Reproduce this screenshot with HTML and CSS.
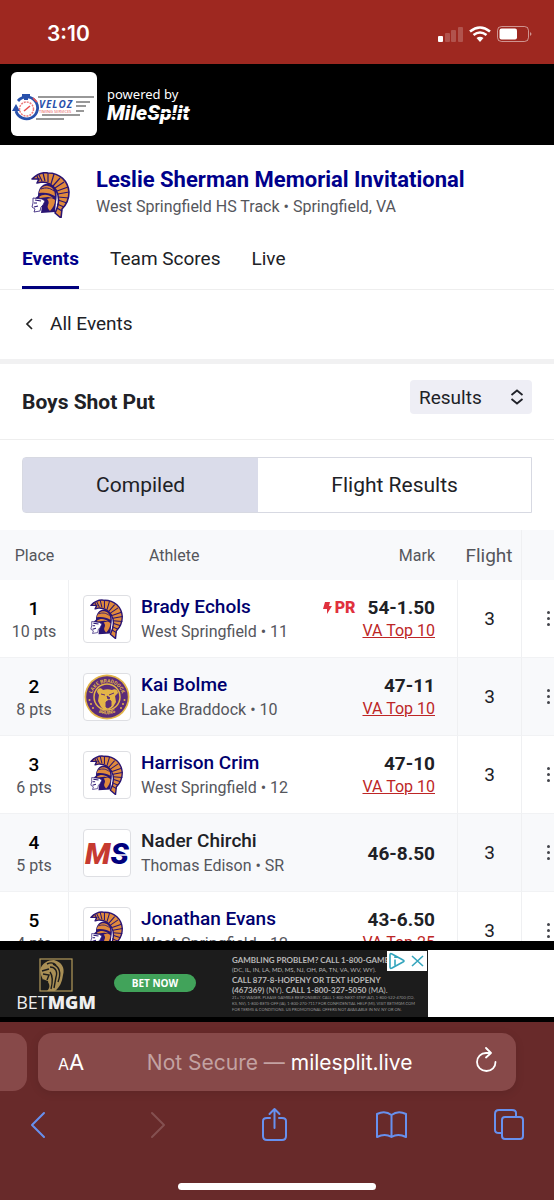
FILE: index.html
```html
<!DOCTYPE html>
<html lang="en">
<head>
    <meta charset="utf-8">
    <meta name="viewport" content="width=device-width, initial-scale=1">
    <title>Leslie Sherman Memorial Invitational</title>
    <link rel="stylesheet" href="styles.css">
</head>
<body>
    <!-- Shared logo -->
    <svg class="sprite" aria-hidden="true">
        <symbol id="spartan" viewBox="0 0 40 46">
            <path d="M1 7C6 2 12 0 17 1c12 0 20 8 21 19 0 7-3 13-7 17l-1 9-6-5c4-8 5-16 1-23-4-6-9-8-14-8l-5 1 2-4z" fill="#e08a3c" stroke="#2a1472" stroke-width="1.6" stroke-linejoin="round"/>
            <path d="M8 9 6 4M11 9 8 3M14 9 12 1M17 10V1M20 12l3-10M22 14l7-8M24 16l9-6M26 19l11-4M27 22l11-2M27 25l11 1M27 28l9 3M26 32l7 3M26 36l5 3" stroke="#2a1472" stroke-width="1.2" fill="none"/>
            <path d="M7 24c0-8 5-13 11-12 7 2 9 9 7 18l-1 10-14 1 1-7-8-7 4-3z" fill="#2a1472"/>
            <path d="M8 21c1-5 5-8 9-7 5 1 7 5 7 10-5-3-10-4-16-3z" fill="#e08a3c"/>
            <path d="M8 25c4-3 9-3 14 1l-5-1-8 1z" fill="#e08a3c"/>
            <path d="M10 17c5-2 9-1 13 2" stroke="#2a1472" fill="none"/>
            <path d="M16 27c3-1 6-1 8 1 0 4-2 8-5 11-2-2-3-4-2-6 1-2 1-4-1-6z" fill="#e08a3c"/>
            <path d="M2 26l9 1 3 2-2 4-2 2-1 4-6 1 1-3-3-2 1-4z" fill="#fff" stroke="#2a1472" stroke-width=".8"/>
            <path d="M4 28l6 1M3 35l4-1M3 31h3" stroke="#2a1472" stroke-width="1.200"/>
        </symbol>
    </svg>

    <div class="status-bar">
        <span class="time">3:10</span>
        <svg class="status-icons" width="94" height="18" viewBox="0 0 94 18" aria-hidden="true">
            <g fill="#fff"><rect y="11" width="5" height="6" rx="1"/>
            <g opacity=".2"><rect x="7" y="8" width="5" height="9" rx="1"/><rect x="13" y="5" width="5" height="12" rx="1"/><rect x="20" y="2" width="5" height="15" rx="1"/></g></g>
            <path d="M32 6.500q10-8 20 0M35.500 10q6.500-5 13 0" fill="none" stroke="#fff" stroke-width="2.600"/>
            <path d="M38.500 13q3.500-2.500 7 0L42 17z" fill="#fff"/>
            <rect x="59.500" y="1.500" width="31" height="15" rx="4" fill="none" stroke="#fff" stroke-opacity=".5"/>
            <rect x="61.500" y="3.500" width="17.500" height="11" rx="2" fill="#fff"/>
            <path d="M92 7q3 2 0 4z" fill="#fff" opacity=".5"/>
        </svg>
    </div>

    <header class="brand-bar">
        <a class="veloz" href="#" aria-label="Veloz Timing Services">
            <svg width="86" height="64" viewBox="0 0 86 64">
                <path d="M27 25h56M65 30h14M65 34h10M65 39h8M31 43h38M25 47h28" stroke="#333" stroke-width="1.200"/>
                <path d="M7 29a11 11 0 1 1-2 10" fill="none" stroke="#2850ab" stroke-width="2.800"/>
                <path d="M11 22h8v3h-2v3h-4v-3h-2zM1 39l4-7 4 7z" fill="#2850ab"/>
                <circle cx="15.500" cy="37" r="7" fill="none" stroke="#ee7c7c" stroke-width="1.500" stroke-dasharray="2 1"/>
                <path d="M13 39l6-5M22 26l4 4" stroke="#e85151" stroke-width="1.600"/>
                <text x="28" y="36" class="veloz-name">VELOZ</text>
                <text x="28" y="41" class="veloz-sub">TIMING SERVICES</text>
            </svg>
        </a>
        <div class="powered">
            <span>powered by</span>
            <span class="milesplit">MileSp!it</span>
        </div>
    </header>

    <main class="page">
        <section class="meet">
            <svg class="meet-logo" aria-hidden="true"><use href="#spartan"/></svg>
            <div>
                <h1>Leslie Sherman Memorial Invitational</h1>
                <p>West Springfield HS Track • Springfield, VA</p>
            </div>
        </section>

        <nav class="tabs">
            <a class="active" href="#">Events</a>
            <a href="#">Team Scores</a>
            <a href="#">Live</a>
        </nav>

        <a class="back" href="#">
            <svg width="8" height="12" viewBox="0 0 8 12" aria-hidden="true"><path d="M7 1 2 6l5 5" fill="none" stroke="#222" stroke-width="1.700"/></svg>
            All Events
        </a>

        <section class="event-head">
            <h2>Boys Shot Put</h2>
            <div class="select-wrap">
                <select aria-label="View"><option>Results</option></select>
                <svg width="14" height="16" viewBox="0 0 14 16" aria-hidden="true"><path d="M1.500 6 7 1.500 12.500 6M1.500 10 7 14.500l5.500-4.500" fill="none" stroke="#1f2128" stroke-width="1.800"/></svg>
            </div>
        </section>

        <div class="toggle">
            <button class="selected" type="button">Compiled</button>
            <button type="button">Flight Results</button>
        </div>

        <table class="results">
            <thead>
                <tr><th class="place">Place</th><th class="athlete">Athlete</th><th class="mark">Mark</th><th class="flight">Flight</th><th class="more"></th></tr>
            </thead>
            <tbody>
                <tr>
                    <td class="place"><b>1</b><span>10 pts</span></td>
                    <td class="athlete"><div class="person"><div class="logo"><svg><use href="#spartan"/></svg></div><div><a href="#">Brady Echols</a><span>West Springfield • 11</span></div></div></td>
                    <td class="mark"><div class="mark-line"><span class="pr"><svg width="9" height="12" viewBox="0 0 9 12" aria-hidden="true"><path d="M2 0h5L6 4h3l-5 8V7H0z" fill="#e0313d"/></svg>PR</span><b>54-1.50</b></div><a href="#">VA Top 10</a></td>
                    <td class="flight">3</td>
                    <td class="more"><button type="button" aria-label="More"><i></i><i></i><i></i></button></td>
                </tr>
                <tr>
                    <td class="place"><b>2</b><span>8 pts</span></td>
                    <td class="athlete"><div class="person"><div class="logo full">
                        <svg viewBox="0 0 46 46">
                            <circle cx="23" cy="23" r="22.500" fill="#e3b548"/>
                            <circle cx="23" cy="23" r="20.800" fill="#5b2c78"/>
                            <circle cx="23" cy="23" r="13" fill="#5b2c78" stroke="#e3b548" stroke-width="1.500"/>
                            <path d="M13 18c0-4 4-5 6-2 3-1 6-1 9 0 3-2 6 0 6 3l-3 3 1 6-3 5-3 2-6 1-3-3-3-6 1-6z" fill="#e3b548"/>
                            <path d="M17 20l4 1M30 19l-5 2M23 22l3 2-2 1zM22 28l3-2 2 1v5l-3 2-2-1z" fill="#5b2c78" stroke="#5b2c78"/>
                            <path id="ring-top" d="M7.500 24a15.500 15.500 0 0 1 31 0" fill="none"/>
                            <path id="ring-bottom" d="M7 30a17.500 17.500 0 0 0 32 0" fill="none"/>
                            <text class="ring-text"><textPath href="#ring-top" startOffset="50%" text-anchor="middle">LAKE BRADDOCK</textPath></text>
                            <text class="ring-text"><textPath href="#ring-bottom" startOffset="50%" text-anchor="middle">BRUINS</textPath></text>
                            <g fill="#e3b548"><circle cx="5.500" cy="26" r="1"/><circle cx="7" cy="30" r="1"/><circle cx="9" cy="34" r="1"/><circle cx="40.500" cy="26" r="1"/><circle cx="39" cy="30" r="1"/><circle cx="37" cy="34" r="1"/></g>
                        </svg>
                    </div><div><a href="#">Kai Bolme</a><span>Lake Braddock • 10</span></div></div></td>
                    <td class="mark"><div class="mark-line"><b>47-11</b></div><a href="#">VA Top 10</a></td>
                    <td class="flight">3</td>
                    <td class="more"><button type="button" aria-label="More"><i></i><i></i><i></i></button></td>
                </tr>
                <tr>
                    <td class="place"><b>3</b><span>6 pts</span></td>
                    <td class="athlete"><div class="person"><div class="logo"><svg><use href="#spartan"/></svg></div><div><a href="#">Harrison Crim</a><span>West Springfield • 12</span></div></div></td>
                    <td class="mark"><div class="mark-line"><b>47-10</b></div><a href="#">VA Top 10</a></td>
                    <td class="flight">3</td>
                    <td class="more"><button type="button" aria-label="More"><i></i><i></i><i></i></button></td>
                </tr>
                <tr>
                    <td class="place"><b>4</b><span>5 pts</span></td>
                    <td class="athlete"><div class="person"><div class="logo full"><svg viewBox="0 0 46 46"><text x="1" y="34" class="ms">M<tspan class="ms-s">S</tspan></text><path d="M28 25h18" stroke="#fff" stroke-width="1.500"/></svg></div><div><strong>Nader Chirchi</strong><span>Thomas Edison • SR</span></div></div></td>
                    <td class="mark"><div class="mark-line"><b>46-8.50</b></div></td>
                    <td class="flight">3</td>
                    <td class="more"><button type="button" aria-label="More"><i></i><i></i><i></i></button></td>
                </tr>
                <tr>
                    <td class="place"><b>5</b><span>4 pts</span></td>
                    <td class="athlete"><div class="person"><div class="logo"><svg><use href="#spartan"/></svg></div><div><a href="#">Jonathan Evans</a><span>West Springfield • 12</span></div></div></td>
                    <td class="mark"><div class="mark-line"><b>43-6.50</b></div><a href="#">VA Top 25</a></td>
                    <td class="flight">3</td>
                    <td class="more"><button type="button" aria-label="More"><i></i><i></i><i></i></button></td>
                </tr>
            </tbody>
        </table>
    </main>

    <aside class="ad-strip">
        <div class="ad">
            <div class="betmgm">
                <svg width="34" height="34" viewBox="0 0 34 34" aria-hidden="true">
                    <rect x="1" y="1" width="32" height="32" fill="none" stroke="#b39a5b" stroke-width="1.200"/>
                    <path d="M1 12C3 5 9 2 15 2c8 2 11 8 9 15-1 7-3 12-8 16H8c3-3 3-6 1-9l-5-2-2-5z" fill="#a98f55"/>
                    <path d="M3 13l7-2M4 16l6 1-2 5M11 9c5 0 8 4 6 10l-2 11M14 6c7 3 8 10 5 18M8 6c4-2 7-1 9 1M11 14c3 4 3 9 1 17M4 22l5 2" fill="none" stroke="#1c1c1c" stroke-width="1.400"/>
                </svg>
                <div class="bet-name">BET<b>MGM</b></div>
            </div>
            <button class="bet-now" type="button">BET NOW</button>
            <div class="legal">
                <p><b>GAMBLING PROBLEM? CALL 1-800-GAMBL</b></p>
                <p class="states">(DC, IL, IN, LA, MD, MS, NJ, OH, PA, TN, VA, WV, WY).</p>
                <p><b>CALL 877-8-HOPENY OR TEXT HOPENY</b></p>
                <p><b>(467369)</b> (NY). <b>CALL 1-800-327-5050</b> (MA).</p>
                <small>21+ TO WAGER. PLEASE GAMBLE RESPONSIBLY. CALL 1-800-NEXT-STEP (AZ), 1-800-522-4700 (CO,</small>
                <small>KS, NV), 1-800-BETS-OFF (IA), 1-800-270-7117 FOR CONFIDENTIAL HELP (MI). VISIT BETMGM.COM</small>
                <small>FOR TERMS &amp; CONDITIONS. US PROMOTIONAL OFFERS NOT AVAILABLE IN NV, NY OR ON.</small>
            </div>
            <div class="ad-choices">
                <svg width="40" height="20" viewBox="0 0 40 20" aria-hidden="true"><path d="M3 4q0-2 2-1l11 6q2 1 0 2L5 17q-2 1-2-1zM8 8.500v6M8 5.500v1.500M25 5l11 10M36 5 25 15" fill="none" stroke="#35a5bd" stroke-width="1.600"/></svg>
            </div>
        </div>
    </aside>

    <footer class="browser">
        <div class="address-row">
            <div class="prev-tab"></div>
            <div class="address">
                <button class="reader" type="button" aria-label="Page settings"><small>A</small>A</button>
                <div class="url"><span>Not Secure —</span> milesplit.live</div>
                <button type="button" aria-label="Reload"><svg width="24" height="28" viewBox="0 0 24 28"><path d="M11 6c-5 0-9 4-9 9s4 9 9.500 9 9-4 9-9M11 1l5 5-5 4.500M11 6h5" fill="none" stroke="#fff" stroke-width="1.800" stroke-linecap="round" stroke-linejoin="round"/></svg></button>
            </div>
        </div>
        <div class="toolbar">
            <button type="button" aria-label="Back"><svg width="32" height="36" viewBox="0 0 32 36"><path d="M21 7 9 19l12 12"/></svg></button>
            <button type="button" aria-label="Forward" disabled><svg width="32" height="36" viewBox="0 0 32 36"><path d="m11 7 12 12-12 12"/></svg></button>
            <button type="button" aria-label="Share"><svg width="32" height="36" viewBox="0 0 32 36"><path d="M11 12H8q-4 0-4 3v15q0 4 4 4h15q4 0 4-4V15q0-3-4-3h-3M15.500 22V3M10.500 8l5-5 5 5"/></svg></button>
            <button type="button" aria-label="Bookmarks"><svg width="32" height="36" viewBox="0 0 32 36"><path d="M15.500 9Q9 4 1 8v23q8-4 14.500 0 6.500-4 14.500 0V8q-8-4-14.500 1zv22"/></svg></button>
            <button type="button" aria-label="Tabs"><svg width="32" height="36" viewBox="0 0 32 36"><rect x="8" y="11" width="21" height="22" rx="3"/><path d="M8 27H5q-4 0-4-3V8q0-4 4-4h13q4 0 4 3v4"/></svg></button>
        </div>
        <div class="home-indicator"></div>
    </footer>
</body>
</html>
```
FILE: styles.css
```css
* {
    box-sizing: border-box;
}

body {
    margin: 0;
    height: 100vh;
    display: flex;
    flex-direction: column;
    overflow: hidden;
    font-family: Roboto, "Liberation Sans", sans-serif;
    font-size: 16px;
    color: #202126;
    background: #fff;
}

h1, h2, p {
    margin: 0;
}

a {
    text-decoration: none;
}

button {
    padding: 0;
    border: none;
    background: none;
    font-family: inherit;
    color: inherit;
    cursor: pointer;
}

.sprite {
    position: absolute;
    width: 0;
    height: 0;
}

/* Phone status bar */
.status-bar {
    flex: none;
    height: 64px;
    padding: 3px 22px 0 47px;
    display: flex;
    align-items: center;
    justify-content: space-between;
    background: #9e2820;
}

.time {
    font-family: Inter, sans-serif;
    font-size: 21px;
    font-weight: 600;
    color: #fff;
}

/* Black brand bar */
.brand-bar {
    flex: none;
    height: 81px;
    padding: 0 11px 1px;
    display: flex;
    align-items: center;
    gap: 10px;
    background: #000;
}

.veloz {
    width: 86px;
    height: 64px;
    border-radius: 6px;
    background: #fff;
}

.veloz-name {
    font: italic 700 10px "Open Sans", sans-serif;
    letter-spacing: 1px;
    fill: #2850ab;
}

.veloz-sub {
    font: 400 4px "Open Sans", sans-serif;
    fill: #e85151;
}

.powered {
    display: flex;
    flex-direction: column;
    color: #fff;
    font-family: "Noto Sans", sans-serif;
    font-size: 13px;
    line-height: 18px;
}

.milesplit {
    position: relative;
    font-family: Roboto, sans-serif;
    font-size: 21px;
    font-style: italic;
    font-weight: 900;
    line-height: 20px;
}

/* Slice through the second half of the wordmark */
.milesplit::after {
    content: "";
    position: absolute;
    top: 10px;
    left: 40px;
    right: 0;
    height: 1px;
    background: #000;
}

/* Page */
.page {
    flex: 1;
    min-height: 0;
    overflow: hidden;
}

.meet {
    height: 89px;
    padding: 21px 22px 0 31px;
    display: flex;
    gap: 25px;
}

.meet-logo {
    flex: none;
    width: 40px;
    height: 46px;
    margin-top: 6px;
}

.meet h1 {
    font-size: 22px;
    line-height: 28px;
    font-weight: 700;
    color: #00008b;
}

.meet p {
    line-height: 26px;
    color: #55565c;
}

.tabs {
    padding: 0 22px;
    display: flex;
    gap: 31px;
    border-bottom: 1px solid #eee;
}

.tabs a {
    height: 55px;
    padding-top: 13px;
    font-size: 19px;
    line-height: 24px;
    color: #202126;
}

.tabs .active {
    font-weight: 700;
    color: #00008b;
    border-bottom: 3px solid #00007d;
}

.back {
    height: 74px;
    padding: 0 25px 2px;
    display: flex;
    align-items: center;
    gap: 17px;
    border-bottom: 5px solid #f1f1f2;
    font-size: 19px;
    color: #202126;
}

.event-head {
    height: 76px;
    padding: 0 22px;
    display: flex;
    align-items: center;
    justify-content: space-between;
    border-bottom: 1px solid #eee;
}

.event-head h2 {
    font-size: 21px;
    font-weight: 700;
}

.select-wrap {
    position: relative;
    margin-bottom: 9px;
}

.select-wrap select {
    appearance: none;
    display: block;
    width: 122px;
    height: 34px;
    padding: 0 9px;
    border: none;
    border-radius: 4px;
    background: #eeeef5;
    font-family: inherit;
    font-size: 19px;
    color: #202126;
}

.select-wrap svg {
    position: absolute;
    top: 9px;
    right: 8px;
    pointer-events: none;
}

.toggle {
    margin: 17px 22px;
    display: flex;
    height: 56px;
    border: 1px solid #d7d9e2;
    border-radius: 4px 0 0 4px;
}

.toggle button {
    flex: 1 1 auto;
    font-size: 21px;
    color: #202126;
}

.toggle .selected {
    background: #dadcea;
}

/* Results table */
.results {
    width: 100%;
    table-layout: fixed;
    border-collapse: separate;
    border-spacing: 0;
}

.results th {
    height: 50px;
    padding: 0;
    font-size: 16px;
    font-weight: 400;
    color: #55565c;
    background: #f8f9fb;
}

.results td {
    height: 78px;
    padding: 0;
    border-bottom: 1px solid #f1f2f4;
}

.results tbody tr:nth-child(even) {
    background: #f8f9fb;
}

.results .place {
    width: 69px;
    text-align: center;
}

.results td.place {
    border-right: 1px solid #eff0f2;
}

.place b,
.place span {
    display: block;
    line-height: 23px;
}

.place b {
    padding-top: 2px;
    font-size: 19px;
    font-weight: 500;
    color: #000;
}

.place span {
    color: #55565c;
}

.results .athlete {
    text-align: left;
}

.results th.athlete {
    padding-left: 80px;
}

.results td.athlete,
.results td.mark {
    padding-top: 1px;
}

.person {
    padding-left: 14px;
    display: flex;
    align-items: center;
    gap: 10px;
}

.logo {
    width: 48px;
    height: 48px;
    display: flex;
    align-items: center;
    justify-content: center;
    border: 1px solid #dedfe3;
    border-radius: 4px;
    background: #fff;
}

.logo svg {
    width: 34px;
    height: 40px;
}

.logo.full svg {
    width: 46px;
    height: 46px;
}

.ring-text {
    font: 700 5px Roboto, sans-serif;
    fill: #e3b548;
}

.ms {
    font: italic 900 30px Roboto, sans-serif;
    fill: #c63a30;
}

.ms-s {
    fill: #00007d;
}

.person a,
.person strong,
.person span {
    display: block;
    line-height: 25px;
}

.person a,
.person strong {
    font-size: 19px;
    font-weight: 500;
}

.person a {
    color: #00006e;
}

.person span {
    color: #55565c;
}

.results .mark {
    width: 138px;
    padding-right: 22px;
    text-align: right;
}

.mark-line {
    display: flex;
    justify-content: flex-end;
    align-items: center;
    gap: 12px;
    font-size: 19px;
    line-height: 23px;
}

.mark-line b {
    font-weight: 700;
}

.pr {
    display: flex;
    align-items: center;
    gap: 3px;
    font-size: 16px;
    font-weight: 900;
    color: #e0313d;
}

.mark > a {
    line-height: 23px;
    color: #bd2626;
    text-decoration: underline;
}

.results .flight {
    width: 65px;
    text-align: center;
    font-size: 19px;
    border-right: 1px solid #eff0f2;
}

.results td.flight {
    border-left: 1px solid #eff0f2;
}

.results .more {
    width: 32px;
}

.more button {
    width: 32px;
    height: 48px;
    padding-left: 25px;
    display: flex;
    flex-direction: column;
    justify-content: center;
    gap: 3px;
}

.more i {
    width: 3px;
    height: 3px;
    border-radius: 50%;
    background: #44454b;
}

/* Bottom advert */
.ad-strip {
    flex: none;
    height: 81px;
    padding: 9px 0 5px;
    background: linear-gradient(#000, #000) 0 0 / 100% 9px no-repeat, linear-gradient(#000, #000) 0 100% / 100% 5px no-repeat, #fff;
}

.ad {
    position: relative;
    width: 428px;
    height: 67px;
    padding-left: 16px;
    display: flex;
    align-items: center;
    background: #1c1c1c;
    color: #b8b8b8;
}

.betmgm {
    width: 80px;
    padding-top: 2px;
    display: flex;
    flex-direction: column;
    align-items: center;
}

.bet-name {
    font: 400 18px/20px "Open Sans", sans-serif;
    color: #eee;
}

.bet-name b {
    font-weight: 800;
}

.bet-now {
    width: 82px;
    height: 18px;
    margin: 0 36px 2px 18px;
    border-radius: 9px;
    background: #41a35a;
    color: #fff;
    font: 700 10px "Open Sans", sans-serif;
}

.legal {
    white-space: nowrap;
    font-family: Lato, sans-serif;
}

.legal p {
    font-size: 8px;
    line-height: 10px;
}

.legal .states {
    font-size: 6px;
}

.legal small {
    display: block;
    font-size: 4px;
    line-height: 6px;
    color: #999;
}

.ad-choices {
    position: absolute;
    top: 1px;
    right: 1px;
    width: 40px;
    height: 20px;
    background: #fff;
}

/* Browser chrome */
.browser {
    flex: none;
    height: 178px;
    padding-top: 11px;
    background: #682a2a;
}

.address-row {
    display: flex;
    gap: 11px;
    padding-right: 38px;
}

.prev-tab {
    width: 27px;
    background: #874949;
    border-radius: 0 14px 14px 0;
}

.address {
    flex: 1;
    height: 58px;
    padding: 0 17px 0 20px;
    display: flex;
    align-items: center;
    justify-content: space-between;
    border-radius: 14px;
    background: #874949;
    box-shadow: 0 2px 10px rgba(0, 0, 0, 0.1);
    color: #fff;
}

.reader {
    font-family: Inter, sans-serif;
    font-size: 22px;
}

.reader small {
    font-size: 16px;
}

.url {
    font-size: 21px;
    font-family: Inter, sans-serif;
}

.url span {
    color: #c3a2a2;
}

.toolbar {
    padding: 15px 28px 0 23px;
    display: flex;
    justify-content: space-between;
}

.toolbar svg {
    display: block;
    fill: none;
    stroke: #6790ee;
    stroke-width: 2;
    stroke-linecap: round;
    stroke-linejoin: round;
}

.toolbar button:disabled svg {
    stroke: #845050;
}

.home-indicator {
    width: 198px;
    height: 7px;
    margin: 41px auto 0;
    border-radius: 4px;
    background: #fff;
}
```
